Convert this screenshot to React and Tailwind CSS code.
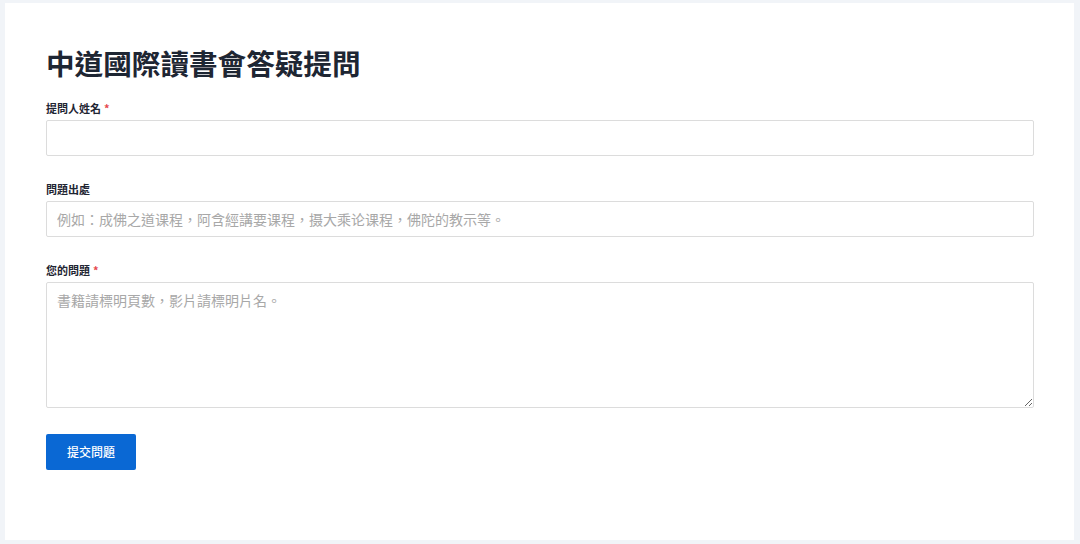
const font = { fontFamily: '"Noto Sans CJK TC", "Noto Sans", sans-serif' };

function Label({ text, required }) {
  return (
    <label className="mb-[4px] block text-[11px] font-bold leading-[16px] text-[#1f2633]">
      {text}
      {required && <span className="ml-[3px] text-[#e5484d]">*</span>}
    </label>
  );
}

export default function App() {
  return (
    <div
      className="flex h-[544px] w-[1080px] bg-[#f1f4f8] pt-[3px] pr-[6px] pb-[4px] pl-[5px]"
      style={font}
    >
      <div className="flex-1 bg-white pl-[41px] pr-[40px] pt-[40px]">
        <h1 className="mb-[17px] text-[28.6px] font-bold leading-[40px] text-[#1e2633]">
          中道國際讀書會答疑提問
        </h1>
        <form className="flex flex-col">
          <Label text="提問人姓名" required />
          <input className="h-[36px] w-[988px] rounded-[2px] border border-[#dcdcdc] px-[10px] text-[14px] outline-none" />

          <div className="mt-[25px]">
            <Label text="問題出處" />
            <input
              className="h-[36px] w-[988px] rounded-[2px] border border-[#dcdcdc] px-[10px] text-[14px] text-[#333] outline-none placeholder:text-[#a8a8a8]"
              placeholder="例如：成佛之道课程，阿含經講要课程，摄大乘论课程，佛陀的教示等。"
            />
          </div>

          <div className="mt-[25px]">
            <Label text="您的問題" required />
            <textarea
              className="block h-[126px] w-[988px] rounded-[2px] border border-[#dcdcdc] px-[10px] py-[6px] text-[14px] leading-[22px] text-[#333] outline-none placeholder:text-[#a8a8a8]"
              placeholder="書籍請標明頁數，影片請標明片名。"
            />
          </div>

          <div className="mt-[26px]">
            <button
              type="button"
              className="h-[36px] w-[90px] rounded-[2px] bg-[#0a68d4] text-[12px] font-medium text-white"
            >
              提交問題
            </button>
          </div>
        </form>
      </div>
    </div>
  );
}
